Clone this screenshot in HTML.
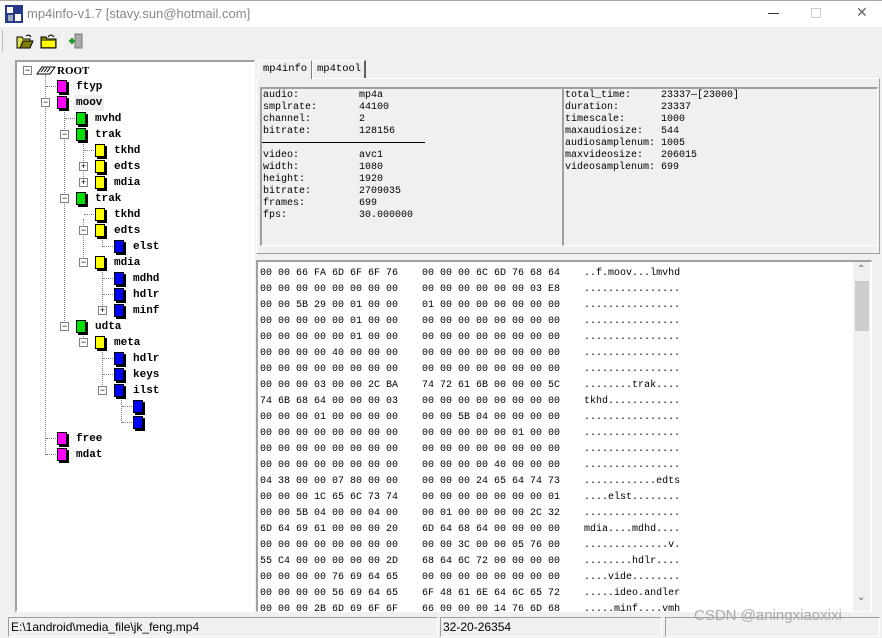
<!DOCTYPE html>
<html><head><meta charset="utf-8">
<style>
*{margin:0;padding:0;box-sizing:border-box}
body{width:882px;height:638px;background:#f0f0f0;position:relative;overflow:hidden;font-family:"Liberation Mono",monospace;font-size:11px;color:#000}
.abs{position:absolute}
.title{left:0;top:0;width:882px;height:27px;background:#fff;border-top:1px solid #aaa}
.title .t{left:27px;top:5px;font-family:"Liberation Sans",sans-serif;font-size:13px;color:#888}
.sunk{border-top:2px solid #a0a0a0;border-left:2px solid #a0a0a0;border-right:1px solid #fff;border-bottom:1px solid #fff}
.tree{left:15px;top:60px;width:240px;height:552px;background:#fff}
.row{position:absolute;height:16px;line-height:16px;font-size:11px;white-space:pre;font-weight:bold;margin-top:1px}
.ic{position:absolute;width:10px;height:13px;border:1px solid #000;box-shadow:2px 2px 0 #000}
.box{position:absolute;width:9px;height:9px;border:1px solid #808080;background:#fff;font-size:9px;line-height:7px;text-align:center;color:#000;font-family:"Liberation Sans",sans-serif}
.vl{position:absolute;border-left:1px dotted #808080;width:0}
.hl{position:absolute;border-top:1px dotted #808080;height:0}
.info{font-size:10px;line-height:12px;white-space:pre}
.hex{left:256px;top:260px;width:616px;height:352px;background:#fff}
.hr{position:absolute;left:2px;font-size:10px;white-space:pre;line-height:16px}
</style></head><body>
<div class="abs title">
 <svg class="abs" style="left:5px;top:4px" width="18" height="18"><rect x="0" y="0" width="18" height="18" fill="#2a3a8a"/><rect x="2" y="2" width="6" height="6" fill="#fff"/><rect x="10" y="9" width="6" height="7" fill="#fff"/><rect x="3" y="10" width="5" height="6" fill="#9ab"/></svg>
 <div class="abs t">mp4info-v1.7 [stavy.sun@hotmail.com]</div>
 <div class="abs" style="left:768px;top:12px;width:11px;height:1px;background:#333"></div>
 <div class="abs" style="left:811px;top:7px;width:10px;height:10px;border:1px solid #ccc"></div>
 <div class="abs" style="left:856px;top:3px;font-family:'Liberation Sans';font-size:14px;color:#666">✕</div>
</div>
<div class="abs" style="left:0;top:30px;width:3px;height:22px;border-right:1px solid #bbb"></div>
<svg class="abs" style="left:16px;top:33px" width="18" height="16"><path d="M1 4h5l1 2h7v9H1z" fill="#dede50" stroke="#000"/><path d="M4 15l3-7h10l-3 7z" fill="#808000" stroke="#000"/><path d="M10 3q3-2 5 1" fill="none" stroke="#000"/></svg>
<svg class="abs" style="left:40px;top:33px" width="18" height="16"><path d="M1 4h5l1 2h9v9H1z" fill="#808000" stroke="#000"/><rect x="2" y="8" width="13" height="6" fill="#ffff00"/><path d="M8 4q3-4 6 0" fill="none" stroke="#000"/></svg>
<div class="abs" style="left:62px;top:32px;width:1px;height:18px;background:#aaa;border-right:1px solid #fff"></div>
<svg class="abs" style="left:68px;top:33px" width="16" height="16"><rect x="7" y="1" width="7" height="14" fill="#aaa" stroke="#777"/><path d="M1 8h6M4 5v6" stroke="#20a020" stroke-width="2.5"/></svg>

<div class="abs tree sunk"></div>
<div class="abs" style="left:0;top:1px;width:0;height:0">
 <div class="vl" style="left:45px;top:74px;height:380px"></div>
 <div class="vl" style="left:64px;top:106px;height:220px"></div>
 <div class="vl" style="left:83px;top:138px;height:44px"></div>
 <div class="vl" style="left:83px;top:218px;height:44px"></div>
 <div class="vl" style="left:102px;top:234px;height:12px"></div>
 <div class="vl" style="left:102px;top:266px;height:44px"></div>
 <div class="vl" style="left:83px;top:330px;height:12px"></div>
 <div class="vl" style="left:102px;top:346px;height:44px"></div>
 <div class="vl" style="left:121px;top:394px;height:28px"></div>
</div>
<div class="abs" style="left:0;top:1px">
<div class="box" style="left:23px;top:65px">−</div>
<svg class="abs" style="left:36px;top:63px" width="20" height="12"><path d="M1 10l5-7h13l-5 7z" fill="#fff" stroke="#000"/><path d="M5 8l3-4M8 8l3-4M11 8l3-4" stroke="#000"/></svg>
<div class="row" style="left:57px;top:61px;font-family:'Liberation Serif';font-size:11px">ROOT</div>

<div class="hl" style="left:46px;top:85px;width:10px"></div><div class="ic" style="left:57px;top:79px;background:#ff00ff"></div><div class="row" style="left:76px;top:77px">ftyp</div>
<div class="box" style="left:41px;top:97px">−</div><div class="ic" style="left:57px;top:95px;background:#ff00ff"></div><div class="row" style="left:74px;top:93px;background:#eee;padding:0 2px">moov</div>

<div class="hl" style="left:65px;top:117px;width:10px"></div><div class="ic" style="left:76px;top:111px;background:#00e000"></div><div class="row" style="left:95px;top:109px">mvhd</div>
<div class="box" style="left:60px;top:129px">−</div><div class="ic" style="left:76px;top:127px;background:#00e000"></div><div class="row" style="left:95px;top:125px">trak</div>
<div class="hl" style="left:84px;top:149px;width:10px"></div><div class="ic" style="left:95px;top:143px;background:#ffff00"></div><div class="row" style="left:114px;top:141px">tkhd</div>
<div class="box" style="left:79px;top:161px">+</div><div class="ic" style="left:95px;top:159px;background:#ffff00"></div><div class="row" style="left:114px;top:157px">edts</div>
<div class="box" style="left:79px;top:177px">+</div><div class="ic" style="left:95px;top:175px;background:#ffff00"></div><div class="row" style="left:114px;top:173px">mdia</div>
<div class="box" style="left:60px;top:193px">−</div><div class="ic" style="left:76px;top:191px;background:#00e000"></div><div class="row" style="left:95px;top:189px">trak</div>
<div class="hl" style="left:84px;top:213px;width:10px"></div><div class="ic" style="left:95px;top:207px;background:#ffff00"></div><div class="row" style="left:114px;top:205px">tkhd</div>
<div class="box" style="left:79px;top:225px">−</div><div class="ic" style="left:95px;top:223px;background:#ffff00"></div><div class="row" style="left:114px;top:221px">edts</div>
<div class="hl" style="left:103px;top:245px;width:10px"></div><div class="ic" style="left:114px;top:239px;background:#0000ff"></div><div class="row" style="left:133px;top:237px">elst</div>
<div class="box" style="left:79px;top:257px">−</div><div class="ic" style="left:95px;top:255px;background:#ffff00"></div><div class="row" style="left:114px;top:253px">mdia</div>
<div class="hl" style="left:103px;top:277px;width:10px"></div><div class="ic" style="left:114px;top:271px;background:#0000ff"></div><div class="row" style="left:133px;top:269px">mdhd</div>
<div class="hl" style="left:103px;top:293px;width:10px"></div><div class="ic" style="left:114px;top:287px;background:#0000ff"></div><div class="row" style="left:133px;top:285px">hdlr</div>
<div class="box" style="left:98px;top:305px">+</div><div class="ic" style="left:114px;top:303px;background:#0000ff"></div><div class="row" style="left:133px;top:301px">minf</div>
<div class="box" style="left:60px;top:321px">−</div><div class="ic" style="left:76px;top:319px;background:#00e000"></div><div class="row" style="left:95px;top:317px">udta</div>
<div class="box" style="left:79px;top:337px">−</div><div class="ic" style="left:95px;top:335px;background:#ffff00"></div><div class="row" style="left:114px;top:333px">meta</div>
<div class="hl" style="left:103px;top:357px;width:10px"></div><div class="ic" style="left:114px;top:351px;background:#0000ff"></div><div class="row" style="left:133px;top:349px">hdlr</div>
<div class="hl" style="left:103px;top:373px;width:10px"></div><div class="ic" style="left:114px;top:367px;background:#0000ff"></div><div class="row" style="left:133px;top:365px">keys</div>
<div class="box" style="left:98px;top:385px">−</div><div class="ic" style="left:114px;top:383px;background:#0000ff"></div><div class="row" style="left:133px;top:381px">ilst</div>
<div class="hl" style="left:122px;top:405px;width:10px"></div><div class="ic" style="left:133px;top:399px;background:#0000ff"></div>
<div class="hl" style="left:122px;top:421px;width:10px"></div><div class="ic" style="left:133px;top:415px;background:#0000ff"></div>
<div class="hl" style="left:46px;top:437px;width:10px"></div><div class="ic" style="left:57px;top:431px;background:#ff00ff"></div><div class="row" style="left:76px;top:429px">free</div>
<div class="hl" style="left:46px;top:453px;width:10px"></div><div class="ic" style="left:57px;top:447px;background:#ff00ff"></div><div class="row" style="left:76px;top:445px">mdat</div>
</div>

<div class="abs" style="left:256px;top:78px;width:624px;height:176px;border:1px solid #fff;border-right-color:#a0a0a0;border-bottom-color:#a0a0a0"></div>
<div class="abs" style="left:258px;top:60px;width:54px;height:19px;border:1px solid #fff;border-right:1px solid #808080;border-bottom:none;background:#f0f0f0;font-size:10.5px;line-height:17px;padding-left:4px">mp4info</div>
<div class="abs" style="left:312px;top:60px;width:54px;height:18px;border:1px solid #fff;border-right:2px solid #606060;border-bottom:none;font-size:10.5px;line-height:17px;padding-left:4px">mp4tool</div>
<div class="abs sunk" style="left:260px;top:87px;width:303px;height:159px"></div>
<div class="abs info" style="left:263px;top:90px">audio:          mp4a
smplrate:       44100
channel:        2
bitrate:        128156</div>
<div class="abs" style="left:262px;top:142px;width:163px;height:1px;background:#000"></div>
<div class="abs info" style="left:263px;top:150px">video:          avc1
width:          1080
height:         1920
bitrate:        2709035
frames:         699
fps:            30.000000</div>
<div class="abs sunk" style="left:562px;top:87px;width:316px;height:159px"></div>
<div class="abs info" style="left:565px;top:90px">total_time:     23337—[23000]
duration:       23337
timescale:      1000
maxaudiosize:   544
audiosamplenum: 1005
maxvideosize:   206015
videosamplenum: 699</div>

<div class="abs hex sunk" style="overflow:hidden">
<div class="hr" style="top:4px">00 00 66 FA 6D 6F 6F 76    00 00 00 6C 6D 76 68 64    ..f.moov...lmvhd
00 00 00 00 00 00 00 00    00 00 00 00 00 00 03 E8    ................
00 00 5B 29 00 01 00 00    01 00 00 00 00 00 00 00    ................
00 00 00 00 00 01 00 00    00 00 00 00 00 00 00 00    ................
00 00 00 00 00 01 00 00    00 00 00 00 00 00 00 00    ................
00 00 00 00 40 00 00 00    00 00 00 00 00 00 00 00    ................
00 00 00 00 00 00 00 00    00 00 00 00 00 00 00 00    ................
00 00 00 03 00 00 2C BA    74 72 61 6B 00 00 00 5C    ........trak....
74 6B 68 64 00 00 00 03    00 00 00 00 00 00 00 00    tkhd............
00 00 00 01 00 00 00 00    00 00 5B 04 00 00 00 00    ................
00 00 00 00 00 00 00 00    00 00 00 00 00 01 00 00    ................
00 00 00 00 00 00 00 00    00 00 00 00 00 00 00 00    ................
00 00 00 00 00 00 00 00    00 00 00 00 40 00 00 00    ................
04 38 00 00 07 80 00 00    00 00 00 24 65 64 74 73    ............edts
00 00 00 1C 65 6C 73 74    00 00 00 00 00 00 00 01    ....elst........
00 00 5B 04 00 00 04 00    00 01 00 00 00 00 2C 32    ................
6D 64 69 61 00 00 00 20    6D 64 68 64 00 00 00 00    mdia....mdhd....
00 00 00 00 00 00 00 00    00 00 3C 00 00 05 76 00    ..............v.
55 C4 00 00 00 00 00 2D    68 64 6C 72 00 00 00 00    ........hdlr....
00 00 00 00 76 69 64 65    00 00 00 00 00 00 00 00    ....vide........
00 00 00 00 56 69 64 65    6F 48 61 6E 64 6C 65 72    .....ideo.andler
00 00 00 2B 6D 69 6F 6F    66 00 00 00 14 76 6D 68    .....minf....vmh</div>
<div class="abs" style="left:595px;top:0;width:17px;height:350px;background:#f0f0f0"></div>
<div class="abs" style="left:597px;top:19px;width:14px;height:50px;background:#cdcdcd"></div>
<div class="abs" style="left:599px;top:2px;font-size:10px;color:#606060;font-family:'Liberation Sans'">⌃</div>
<div class="abs" style="left:599px;top:330px;font-size:10px;color:#606060;font-family:'Liberation Sans'">⌄</div>
</div>

<div class="abs" style="left:8px;top:617px;width:430px;height:20px;border:1px solid #a0a0a0;border-right-color:#fff;border-bottom-color:#fff;font-family:'Liberation Sans';font-size:12px;line-height:18px;padding-left:2px">E:\1android\media_file\jk_feng.mp4</div>
<div class="abs" style="left:440px;top:617px;width:222px;height:20px;border:1px solid #a0a0a0;border-right-color:#fff;border-bottom-color:#fff;font-family:'Liberation Sans';font-size:12px;line-height:18px;padding-left:2px">32-20-26354</div>
<div class="abs" style="left:665px;top:617px;width:215px;height:20px;border:1px solid #a0a0a0;border-right-color:#fff;border-bottom-color:#fff"></div>
<div class="abs" style="left:694px;top:607px;font-family:'Liberation Sans';font-size:15px;color:#aaa">CSDN @aningxiaoxixi</div>
</body></html>
